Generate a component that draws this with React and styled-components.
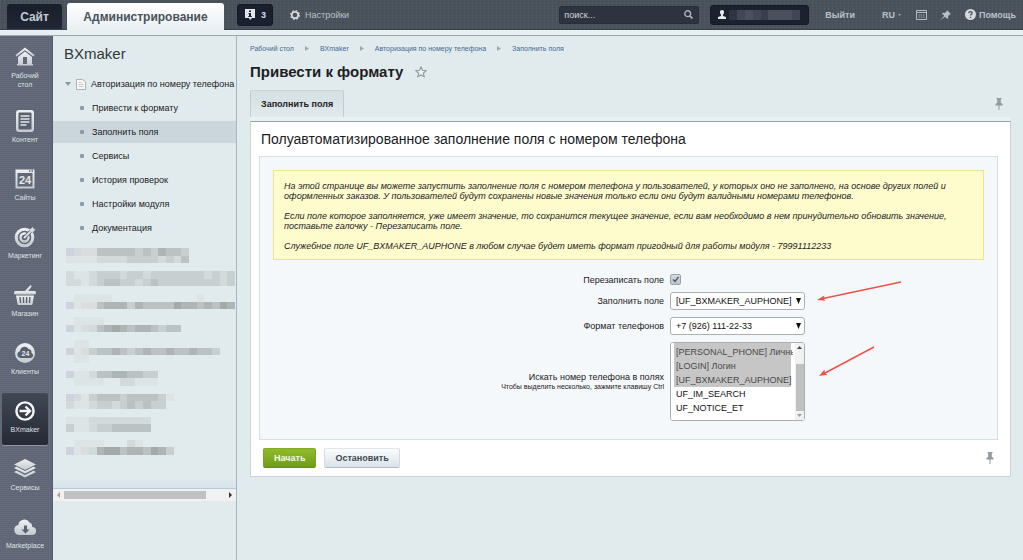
import React, { useEffect, useRef } from "react";
import styled, { createGlobalStyle, css } from "styled-components";

const Global = createGlobalStyle`
  *, *::before, *::after { box-sizing: border-box; }
  body { margin: 0; background: #e1ebed; font-family: "Liberation Sans", Arial, sans-serif; font-size: 9px; color: #1c2023; }
  button, input, select { font: inherit; margin: 0; }
  h1, h2, p, ul { margin: 0; padding: 0; font-weight: normal; }
  ul { list-style: none; }
  a { color: inherit; text-decoration: none; }
  svg { display: block; flex: none; }
`;

const Page = styled.div`
  display: flex;
  flex-direction: column;
  height: 100vh;
  overflow: hidden;
`;

/* Top bar */
const TopBar = styled.header`
  display: flex;
  align-items: center;
  height: 30px;
  flex: none;
  padding: 0 7px;
  color: #b9c2ca;
  border-bottom: 1px solid #3b424b;
  background:
    repeating-linear-gradient(90deg, rgba(255, 255, 255, 0.03) 0 1px, transparent 1px 4px),
    repeating-linear-gradient(0deg, rgba(0, 0, 0, 0.05) 0 1px, transparent 1px 3px),
    #4a525c;
`;
const SubBar = styled.div`
  height: 6px;
  flex: none;
  background: #e8eff3;
  border-bottom: 1px solid #9ba6ab;
`;
const TopTab = styled.a`
  display: flex;
  align-items: center;
  justify-content: center;
  align-self: flex-end;
  height: ${(p) => (p.$active ? 27 : 25)}px;
  width: ${(p) => (p.$active ? 157 : 55)}px;
  margin-bottom: ${(p) => (p.$active ? -1 : 0)}px;
  margin-right: ${(p) => (p.$active ? 13 : 5)}px;
  border-radius: 3px 3px 0 0;
  font-size: 12px;
  font-weight: bold;
  color: ${(p) => (p.$active ? "#4b5259" : "#c3cad2")};
  background: ${(p) => (p.$active ? "linear-gradient(#ffffff, #e8eff3)" : "linear-gradient(#191e2b, #212736)")};
`;
const Counter = styled.button`
  display: flex;
  align-items: center;
  gap: 6px;
  width: 36px;
  height: 22px;
  padding: 0 7px;
  border: 1px solid #131824;
  border-radius: 3px;
  background: #1a2030;
  color: #d8dde2;
  font-weight: bold;
`;
const TopLink = styled.a`
  display: flex;
  align-items: center;
  gap: ${(p) => (p.$bold ? 3 : 5)}px;
  margin-left: ${(p) => p.$gap}px;
  font-weight: ${(p) => (p.$bold ? "bold" : "normal")};
  color: #b9c2ca;
`;
const Spacer = styled.div`
  flex: 1;
`;
const Search = styled.label`
  display: flex;
  align-items: center;
  width: 140px;
  height: 18px;
  padding: 0 5px 0 4px;
  border: 1px solid #282d39;
  border-radius: 2px;
  background: #2e3340;
`;
const SearchInput = styled.input`
  flex: 1;
  min-width: 0;
  padding: 0;
  border: 0;
  outline: 0;
  background: transparent;
  color: #d3d8dd;
  &::placeholder { color: #d3d8dd; opacity: 1; }
`;
const User = styled.button`
  display: flex;
  align-items: center;
  gap: 3px;
  width: 99px;
  height: 20px;
  margin-left: 11px;
  padding: 0 7px;
  border: 1px solid #151a27;
  border-radius: 3px;
  background: #1c2130;
`;

/* Body */
const Body = styled.div`
  display: flex;
  flex: 1;
  min-height: 0;
`;
const Rail = styled.nav`
  display: flex;
  flex-direction: column;
  gap: 6px;
  width: 53px;
  flex: none;
  padding: 3px 2px 0;
  overflow: hidden;
  background:
    repeating-linear-gradient(0deg, rgba(0, 0, 0, 0.06) 0 1px, transparent 1px 2px),
    #656b7b;
  border-right: 1px solid #565c6b;
`;
const RailItem = styled.a`
  display: flex;
  flex-direction: column;
  align-items: center;
  gap: 3px;
  width: 46px;
  min-height: 52px;
  flex: none;
  padding: 7px 0 8px;
  border-radius: 2px;
  font-size: 7px;
  line-height: 9px;
  text-align: center;
  white-space: pre-line;
  color: #dfe3e6;
  ${(p) =>
    p.$active &&
    css`
      background: linear-gradient(#424854, #252a34);
      box-shadow: 0 1px 0 #8f95a0;
    `}
`;

const Sidebar = styled.aside`
  width: 184px;
  flex: none;
  background: #e1ebed;
  border-right: 1px solid #a3b5c0;
`;
const SideTitle = styled.h2`
  padding: 9px 11px 0;
  font-size: 15px;
  line-height: 18px;
  color: #32383d;
`;
const Tree = styled.ul`
  display: flex;
  flex-direction: column;
  gap: 2px;
  padding-top: 10px;
`;
const TreeRow = styled.a`
  display: flex;
  align-items: center;
  height: 22px;
  padding-left: ${(p) => (p.$child ? 27 : 12)}px;
  gap: ${(p) => (p.$child ? 8 : 5)}px;
  white-space: nowrap;
  background: ${(p) => (p.$active ? "#cbd6dc" : "transparent")};
`;
const Dot = styled.span`
  width: 4px;
  height: 4px;
  border-radius: 1px;
  background: #8e9bab;
`;
const Hidden = styled.div`
  height: 250px;
  padding: 9px 0 0 13px;
  border-bottom: 1px solid #b4ccd8;
  background: linear-gradient(transparent 96%, #d6e3ea);
`;
const ScrollTrack = styled.div`
  display: flex;
  align-items: center;
  height: 12px;
  padding: 0 4px;
  gap: 4px;
  background: #f1f1f1;
`;
const ScrollThumb = styled.div`
  width: 142px;
  height: 8px;
  margin-right: auto;
  background: #c1c1c1;
`;

/* Main area */
const Main = styled.main`
  flex: 1;
  min-width: 0;
  padding: 7px 12px 0 13px;
  background: #e1ebed;
`;
const Crumbs = styled.nav`
  display: flex;
  align-items: center;
  gap: 11px;
  height: 10px;
  font-size: 7px;
  color: #46688f;
`;
const TitleRow = styled.div`
  display: flex;
  align-items: center;
  gap: 12px;
  height: 20px;
  margin-top: 9px;
`;
const Title = styled.h1`
  font-size: 15px;
  font-weight: bold;
  line-height: 20px;
`;
const TabRow = styled.div`
  display: flex;
  align-items: center;
  justify-content: space-between;
  height: 27px;
  margin-top: 8px;
  padding-right: 8px;
`;
const Tab = styled.button`
  height: 27px;
  padding: 0 10px;
  border: 1px solid #c0ccd0;
  border-top-color: #cad5d8;
  border-bottom: 0;
  border-radius: 2px 2px 0 0;
  background: linear-gradient(#d5e0e3, #e1e9ec);
  font-weight: bold;
  color: inherit;
`;
const PinButton = styled.button`
  padding: 0;
  border: 0;
  background: none;
`;
const Panel = styled.section`
  border: 1px solid #c9d4d7;
  border-top-color: #94a1a6;
  margin-top: 4px;
  padding: 0 12px 0 8px;
  background: #fff;
  box-shadow: 0 -4px 0 #eaf1f3;
`;
const PanelTitle = styled.h2`
  padding: 8px 2px 8px;
  font-size: 14px;
  line-height: 18px;
`;
const FormBox = styled.form`
  padding: 13px 13px 18px;
  border: 1px solid #d5e1e4;
  background: #f4f8fa;
`;
const Note = styled.div`
  display: flex;
  flex-direction: column;
  gap: 10px;
  padding: 10px 10px 8px;
  border: 1px solid #efe38d;
  background: #fefccd;
  font-style: italic;
  line-height: 10px;
`;
const Fields = styled.div`
  display: grid;
  grid-template-columns: 55% 1fr;
  gap: 7px 6px;
  align-items: center;
  padding-top: 14px;
`;
const FieldLabel = styled.label`
  text-align: right;
  line-height: 10px;
`;
const Hint = styled.small`
  display: block;
  font-size: 7px;
`;
const Control = styled.div`
  position: relative;
  width: 135px;
  display: flex;
`;
const Check = styled.input`
  appearance: none;
  width: 11px;
  height: 11px;
  border: 1px solid #9aa3ad;
  border-radius: 2px;
  background: url("data:image/svg+xml,%3Csvg xmlns='http://www.w3.org/2000/svg' viewBox='0 0 9 9'%3E%3Cpath d='M2 4.5l2 2L7.5 2' fill='none' stroke='%23505862' stroke-width='1.4'/%3E%3C/svg%3E") center / 9px,
    linear-gradient(#d3d9e0, #bcc4ce);
`;
const frame = css`
  width: 100%;
  border: 1px solid #a9b0b4;
  border-radius: 3px;
  background-color: #fff;
  color: #111;
  outline: 0;
`;
const Select = styled.select`
  ${frame}
  appearance: none;
  height: 18px;
  padding: 0 11px 0 5px;
  background-image: url("data:image/svg+xml,%3Csvg xmlns='http://www.w3.org/2000/svg' viewBox='0 0 5 6'%3E%3Cpath d='M0 0h5L2.5 6z' fill='%23111'/%3E%3C/svg%3E");
  background-size: 5px 6px;
  background-repeat: no-repeat;
  background-position: right 3px center;
`;
const ListBox = styled.select`
  ${frame}
  height: 79px;
  padding: 0 13px 5px 3px;
  overflow-y: scroll;
  scrollbar-width: none;
  option { height: 14px; min-height: 14px; padding: 2px 2px 0; line-height: 10px; }
  option:checked { background: linear-gradient(#c6c6c6, #c6c6c6); color: #4a4a4a; }
`;
const ListScroll = styled.div`
  position: absolute;
  inset: 1px 1px 1px auto;
  width: 11px;
  display: flex;
  flex-direction: column;
  align-items: center;
  justify-content: space-between;
  padding: 3px 0;
  border-left: 2px solid #fff;
  border-radius: 0 2px 2px 0;
  background: #f1f1f1;
`;
const ListThumb = styled.div`
  width: 8px;
  height: 47px;
  margin: auto 0 3px;
  background: #c1c1c1;
`;
const Pointer = styled.svg`
  position: absolute;
  left: 147px;
  top: ${(p) => p.$top}px;
`;
const Actions = styled.div`
  display: flex;
  align-items: center;
  gap: 8px;
  height: 36px;
  padding: 0 4px;
`;
const Button = styled.button`
  height: 20px;
  padding: 0 10px;
  border: 1px solid;
  border-radius: 2px;
  font-weight: bold;
  ${(p) =>
    p.$primary
      ? css`
          border-color: #82ac27 #7aa421 #668c1b;
          background: linear-gradient(#8fbb2a, #6f9d1b);
          color: #f4fae6;
        `
      : css`
          border-color: #e0e7ea #d3dbdf #b3bec4;
          background: linear-gradient(#fbfcfd, #d9e3e9);
          color: #414b54;
        `}
`;

/* Icons */
const Metal = ({ id }) => (
  <defs>
    <linearGradient id={id} x1="0" y1="0" x2="0" y2="1">
      <stop offset="0" stopColor="#eef1f2" />
      <stop offset="1" stopColor="#c3cacd" />
    </linearGradient>
  </defs>
);
const dark = "#5a6070";
const railShapes = {
  home: (f) => (
    <>
      <path d="M11 1.500L1.500 9l1.200 1.600L11 4.200l8.300 6.400L20.500 9 11 1.500z" fill={f} />
      <path d="M4 11l7-5.400L18 11v7h1v1.500H3V18h1zM9 18h4v-7H9z" fill={f} fillRule="evenodd" />
    </>
  ),
  doc: (f) => (
    <>
      <rect x="2" y="0" width="18" height="22" rx="3" fill={f} />
      <rect x="4.500" y="2.500" width="13" height="17" rx="1" fill={dark} />
      <path d="M6.500 6h9M6.500 9h9M6.500 12h9M6.500 15h6" stroke="#e3e7e9" strokeWidth="1.400" />
    </>
  ),
  sites: (f) => (
    <>
      <path d="M1.500 1.500h19v19h-19zM3.500 5v13.500h15V5z" fill={f} fillRule="evenodd" />
      <path d="M15 3h1.500M17.500 3H19" stroke={dark} strokeWidth="1.400" />
      <text x="11" y="15.500" textAnchor="middle" fontSize="11" fontWeight="bold" fill="#e3e7e9">24</text>
    </>
  ),
  target: (f) => (
    <>
      <circle cx="10.500" cy="11.500" r="8.300" fill="none" stroke={f} strokeWidth="3" />
      <circle cx="10.500" cy="11.500" r="4" fill="none" stroke={f} strokeWidth="2.400" />
      <path d="M10.500 11.500L17 5" stroke={dark} strokeWidth="3.600" />
      <path d="M10 12l7-7" stroke="#dfe3e5" strokeWidth="1.800" />
      <path d="M15.500 6.500l.3-3L19 1l.5 2 2 .6-2.700 3z" fill={f} />
    </>
  ),
  basket: (f) => (
    <>
      <path d="M10 8l6.500-7 1.300 1.200L13.500 8" fill="#dfe3e5" />
      <rect x="0" y="7" width="22" height="3.500" rx="1.500" fill={f} />
      <path d="M2 11.500h18L18.500 20q-.2 1-1.200 1H4.700q-1 0-1.200-1z" fill={f} />
      <path d="M6 13l.6 6M9.400 13l.2 6M12.700 13l-.2 6M16 13l-.6 6" stroke={dark} strokeWidth="1.400" />
    </>
  ),
  clients: (f) => (
    <>
      <circle cx="11" cy="11" r="10" fill={f} />
      <path d="M6.500 16a3.400 3.400 0 0 1-.5-6.700A4.600 4.600 0 0 1 14.500 7a3.600 3.600 0 0 1 3 4 2.600 2.600 0 0 1-1 5z" fill={dark} />
      <text x="11.500" y="14" textAnchor="middle" fontSize="7" fontWeight="bold" fill="#e3e7e9">24</text>
    </>
  ),
  arrow: () => (
    <>
      <circle cx="11" cy="11" r="8.600" fill="none" stroke="#f4f5f6" strokeWidth="2.400" />
      <path d="M5.500 11h10M11.500 6.500l4.500 4.500-4.500 4.500" fill="none" stroke="#f4f5f6" strokeWidth="2.400" />
    </>
  ),
  layers: (f) => (
    <>
      <path d="M11 1l11 5.500L11 12 0 6.500z" fill={f} />
      <path d="M0 10l2.600-1.300L11 13l8.400-4.300L22 10l-11 5.500zM0 14l2.600-1.300L11 17l8.400-4.300L22 14l-11 5.500z" fill={f} />
    </>
  ),
  cloud: (f) => (
    <>
      <path d="M5 19a5 5 0 0 1-.6-9.900A6 6 0 0 1 15.500 6.500a4 4 0 0 1 2.600 4.500A4 4 0 0 1 18 19z" fill={f} />
      <path d="M10 9.500h3v4h2.500l-4 4-4-4H10z" fill={dark} />
    </>
  ),
};
const RailIcon = ({ name }) => (
  <svg width="22" height="22" viewBox="0 0 22 22" aria-hidden="true">
    <Metal id={`metal-${name}`} />
    {railShapes[name](`url(#metal-${name})`)}
  </svg>
);
const PinIcon = () => (
  <svg width="8" height="12" viewBox="0 0 8 12" aria-hidden="true">
    <path d="M1.500 0h5v1.300h-.7v3.400L7.500 6v1.500h-3V12h-1V7.500h-3V6l1.700-1.300V1.300h-.7z" fill="#929b9f" />
  </svg>
);
const Chevron = () => (
  <svg width="4" height="5" viewBox="0 0 4 5" aria-hidden="true">
    <path d="M0 0l4 2.500L0 5z" fill="#9aa9b3" />
  </svg>
);

/* Pixelated blocks that cover private text */
const shades = {
  b: "#cdd3dc", w: "#dadddd", 0: "#dce4e5", 1: "#d3dadb", 2: "#c8cfd0", 3: "#bbc2c3", 4: "#afb5b6", 5: "#a4a9aa",
};
const mosaicRows = [
  "b1ww333332324332", "0000111122221213", "", "1001222122122222221212", "1101233221232222222212", "",
  ".00000...........0....", "b0ww344424333354434354", "", ".0000", "b0w134543443233", "", ".00",
  "b0w23343234334334332", ".00", "", "b00133443322", ".0000..11000", "", "b1023332333320",
  "1001221232322", "", "00011111111", "20012233333", "", ".0000...10", "b0w14553443542",
];
const Mosaic = ({ rows, columns, width, height, palette }) => (
  <svg width={width} height={height} viewBox={`0 0 ${columns} ${rows.length}`} preserveAspectRatio="none" shapeRendering="crispEdges" aria-hidden="true">
    {rows.flatMap((row, y) =>
      [...row].map((c, x) => (palette[c] ? <rect key={`${x}-${y}`} x={x} y={y} width="1" height="1" fill={palette[c]} /> : null))
    )}
  </svg>
);
const userShades = { a: "#2f3543", b: "#414754", c: "#4a505c", d: "#383e4b" };

const railItems = [
  ["home", "Рабочий\nстол"], ["doc", "Контент"], ["sites", "Сайты"], ["target", "Маркетинг"], ["basket", "Магазин"],
  ["clients", "Клиенты"], ["arrow", "BXmaker"], ["layers", "Сервисы"], ["cloud", "Marketplace"],
];
const menu = ["Привести к формату", "Заполнить поля", "Сервисы", "История проверок", "Настройки модуля", "Документация"];
const crumbs = ["Рабочий стол", "BXmaker", "Авторизация по номеру телефона", "Заполнить поля"];

export default function App() {
  const list = useRef(null);
  useEffect(() => {
    list.current.scrollTop = list.current.scrollHeight;
  }, []);

  return (
    <Page>
      <Global />
      <TopBar>
        <TopTab href="#">Сайт</TopTab>
        <TopTab href="#" $active>Администрирование</TopTab>
        <Counter>
          <svg width="10" height="11" viewBox="0 0 10 11" aria-hidden="true">
            <path d="M0 0h10v9H7l-2 2-1-2H0z" fill="#e3e6e8" />
            <path d="M4 1.500h2V3H4zM3.500 4H6v3h.8v1H3.300V7H4V5h-.5z" fill="#1a2030" />
          </svg>
          3
        </Counter>
        <TopLink href="#" $gap={17}>
          <svg width="10" height="10" viewBox="0 0 10 10" aria-hidden="true">
            <circle cx="5" cy="5" r="3.200" fill="none" stroke="#d3d8dc" strokeWidth="1.800" />
            <circle cx="5" cy="5" r="4.400" fill="none" stroke="#d3d8dc" strokeWidth="1.200" strokeDasharray="1.730 1.730" />
          </svg>
          Настройки
        </TopLink>
        <Spacer />
        <Search>
          <SearchInput aria-label="Поиск" placeholder="поиск..." />
          <svg width="9" height="9" viewBox="0 0 9 9" fill="none" stroke="#aab2b9" strokeWidth="1.400" aria-hidden="true">
            <circle cx="3.700" cy="3.700" r="2.900" />
            <path d="M5.800 5.800l2.700 2.700" strokeWidth="1.800" />
          </svg>
        </Search>
        <User aria-label="Профиль">
          <svg width="8" height="9" viewBox="0 0 8 9" fill="#e6e9eb" aria-hidden="true">
            <path d="M4 0a2 2 0 0 1 2 2.300Q6 4 5 4.800V6l3 1v2H0V7l3-1V4.800Q2 4 2 2.300A2 2 0 0 1 4 0z" />
          </svg>
          <Mosaic rows={["abcbdcccb"]} columns={9} width={71} height={10} palette={userShades} />
        </User>
        <TopLink href="#" $gap={16} $bold>Выйти</TopLink>
        <TopLink href="#" $gap={27} $bold>
          RU
          <svg width="3" height="2" viewBox="0 0 3 2" aria-hidden="true"><path d="M0 0h3L1.500 2z" fill="#9aa3ab" /></svg>
        </TopLink>
        <TopLink href="#" $gap={15} aria-label="Календарь">
          <svg width="11" height="10" viewBox="0 0 11 10" aria-hidden="true">
            <path d="M.5.5h10v9H.5zM.5 2.500h10" fill="none" stroke="#b5bdc4" />
            <path d="M2.500 5h6M2.500 7h6" stroke="#9aa3ab" strokeDasharray="1.500 .7" />
          </svg>
        </TopLink>
        <TopLink href="#" $gap={14} aria-label="Закрепить">
          <svg width="10" height="10" viewBox="0 0 10 10" aria-hidden="true">
            <path d="M5.800 0L10 4.200l-1.200.2-1.700 1.700.1 2.100-.8.800L4 6.700.4 9.600 0 9.500l3.200-3.700L1 3.500l.8-.7 2.200.1L5.700 1.200z" fill="#b9c1c7" />
          </svg>
        </TopLink>
        <TopLink href="#" $gap={14} $bold>
          <svg width="11" height="11" viewBox="0 0 11 11" aria-hidden="true">
            <circle cx="5.500" cy="5.500" r="5.500" fill="#d5dadd" />
            <path d="M3.800 4.300q0-1.700 1.700-1.700t1.700 1.500q0 .8-.9 1.300-.8.500-.8 1.200M5.500 7.700v1.200" fill="none" stroke="#4a525c" strokeWidth="1.300" />
          </svg>
          Помощь
        </TopLink>
      </TopBar>
      <SubBar />
      <Body>
        <Rail>
          {railItems.map(([icon, label]) => (
            <RailItem key={icon} href="#" $active={icon === "arrow"}>
              <RailIcon name={icon} />
              {label}
            </RailItem>
          ))}
        </Rail>
        <Sidebar>
          <SideTitle>BXmaker</SideTitle>
          <Tree>
            <li>
              <TreeRow href="#">
                <svg width="6" height="4" viewBox="0 0 6 4" aria-hidden="true"><path d="M0 0h6L3 4z" fill="#8797a5" /></svg>
                <svg width="10" height="11" viewBox="0 0 10 11" aria-hidden="true">
                  <path d="M.5.5h6l3 2.500v7.500h-9z" fill="#f8f8f6" stroke="#adb1b1" />
                  <path d="M2.500 3.500h3M2.500 5.500h5M2.500 7.500h5" stroke="#c8cbcb" />
                </svg>
                Авторизация по номеру телефона
              </TreeRow>
            </li>
            {menu.map((item) => (
              <li key={item}>
                <TreeRow href="#" $child $active={item === "Заполнить поля"}>
                  <Dot />
                  {item}
                </TreeRow>
              </li>
            ))}
          </Tree>
          <Hidden>
            <Mosaic rows={mosaicRows} columns={22} width={169} height={207} palette={shades} />
          </Hidden>
          <ScrollTrack>
            <svg width="3" height="6" viewBox="0 0 3 6" aria-hidden="true"><path d="M3 0v6L0 3z" fill="#a3a3a3" /></svg>
            <ScrollThumb />
            <svg width="3" height="6" viewBox="0 0 3 6" aria-hidden="true"><path d="M0 0v6l3-3z" fill="#333" /></svg>
          </ScrollTrack>
        </Sidebar>
        <Main>
          <Crumbs>
            {crumbs.map((crumb, i) => (
              <React.Fragment key={crumb}>
                {i > 0 && <Chevron />}
                <a href="#">{crumb}</a>
              </React.Fragment>
            ))}
          </Crumbs>
          <TitleRow>
            <Title>Привести к формату</Title>
            <svg width="12" height="12" viewBox="0 0 12 12" aria-hidden="true">
              <path d="M6 1l1.500 3.300 3.600.4-2.700 2.400.8 3.600L6 8.900l-3.200 1.800.8-3.600L.9 4.700l3.600-.4z" fill="#e9f0f2" stroke="#8d9aa3" strokeWidth="1.100" />
            </svg>
          </TitleRow>
          <TabRow>
            <Tab>Заполнить поля</Tab>
            <PinButton aria-label="Закрепить панель"><PinIcon /></PinButton>
          </TabRow>
          <Panel>
            <PanelTitle>Полуавтоматизированное заполнение поля с номером телефона</PanelTitle>
            <FormBox id="fill" onSubmit={(e) => e.preventDefault()}>
              <Note>
                <p>
                  На этой странице вы можете запустить заполнение поля с номером телефона у пользователей, у которых оно не заполнено, на основе других полей и<br />
                  оформленных заказов. У пользователей будут сохранены новые значения только если они будут валидными номерами телефонов.
                </p>
                <p>
                  Если поле которое заполняется, уже имеет значение, то сохранится текущее значение, если вам необходимо в нем принудительно обновить значение,<br />
                  поставьте галочку - Перезаписать поле.
                </p>
                <p>Служебное поле UF_BXMAKER_AUPHONE в любом случае будет иметь формат пригодный для работы модуля - 79991112233</p>
              </Note>
              <Fields>
                <FieldLabel htmlFor="overwrite">Перезаписать поле</FieldLabel>
                <Control><Check id="overwrite" type="checkbox" defaultChecked /></Control>
                <FieldLabel htmlFor="target">Заполнить поле</FieldLabel>
                <Control>
                  <Select id="target"><option>[UF_BXMAKER_AUPHONE]</option></Select>
                  <Pointer $top={-12} width="86" height="24" viewBox="0 0 86 24" aria-hidden="true">
                    <path d="M84 2L6 18.500" stroke="#ee5148" strokeWidth="1.500" />
                    <path d="M0 20l7.500-4.500-1 3 2 2.300z" fill="#ee5148" />
                  </Pointer>
                </Control>
                <FieldLabel htmlFor="format">Формат телефонов</FieldLabel>
                <Control><Select id="format"><option>+7 (926) 111-22-33</option></Select></Control>
                <FieldLabel htmlFor="sources">
                  Искать номер телефона в полях
                  <Hint>Чтобы выделить несколько, зажмите клавишу Ctrl</Hint>
                </FieldLabel>
                <Control>
                  <ListBox id="sources" ref={list} multiple defaultValue={["email", "phone", "login", "uf"]}>
                    <option value="email">[EMAIL]</option>
                    <option value="phone">[PERSONAL_PHONE] Личный телефон</option>
                    <option value="login">[LOGIN] Логин</option>
                    <option value="uf">[UF_BXMAKER_AUPHONE] телефон</option>
                    <option value="im">UF_IM_SEARCH</option>
                    <option value="notice">UF_NOTICE_ET</option>
                  </ListBox>
                  <ListScroll aria-hidden="true">
                    <svg width="5" height="3" viewBox="0 0 5 3"><path d="M0 3h5L2.500 0z" fill="#444" /></svg>
                    <ListThumb />
                    <svg width="5" height="3" viewBox="0 0 5 3"><path d="M0 0h5L2.500 3z" fill="#a3a3a3" /></svg>
                  </ListScroll>
                  <Pointer $top={3} width="60" height="34" viewBox="0 0 60 34" aria-hidden="true">
                    <path d="M57 2L8 28" stroke="#ee5148" strokeWidth="1.500" />
                    <path d="M2 31l5.500-6.500.3 3.200 2.700 2z" fill="#ee5148" />
                  </Pointer>
                </Control>
              </Fields>
            </FormBox>
            <Actions>
              <Button type="submit" form="fill" $primary>Начать</Button>
              <Button type="button">Остановить</Button>
              <Spacer />
              <PinButton aria-label="Закрепить кнопки"><PinIcon /></PinButton>
            </Actions>
          </Panel>
        </Main>
      </Body>
    </Page>
  );
}
